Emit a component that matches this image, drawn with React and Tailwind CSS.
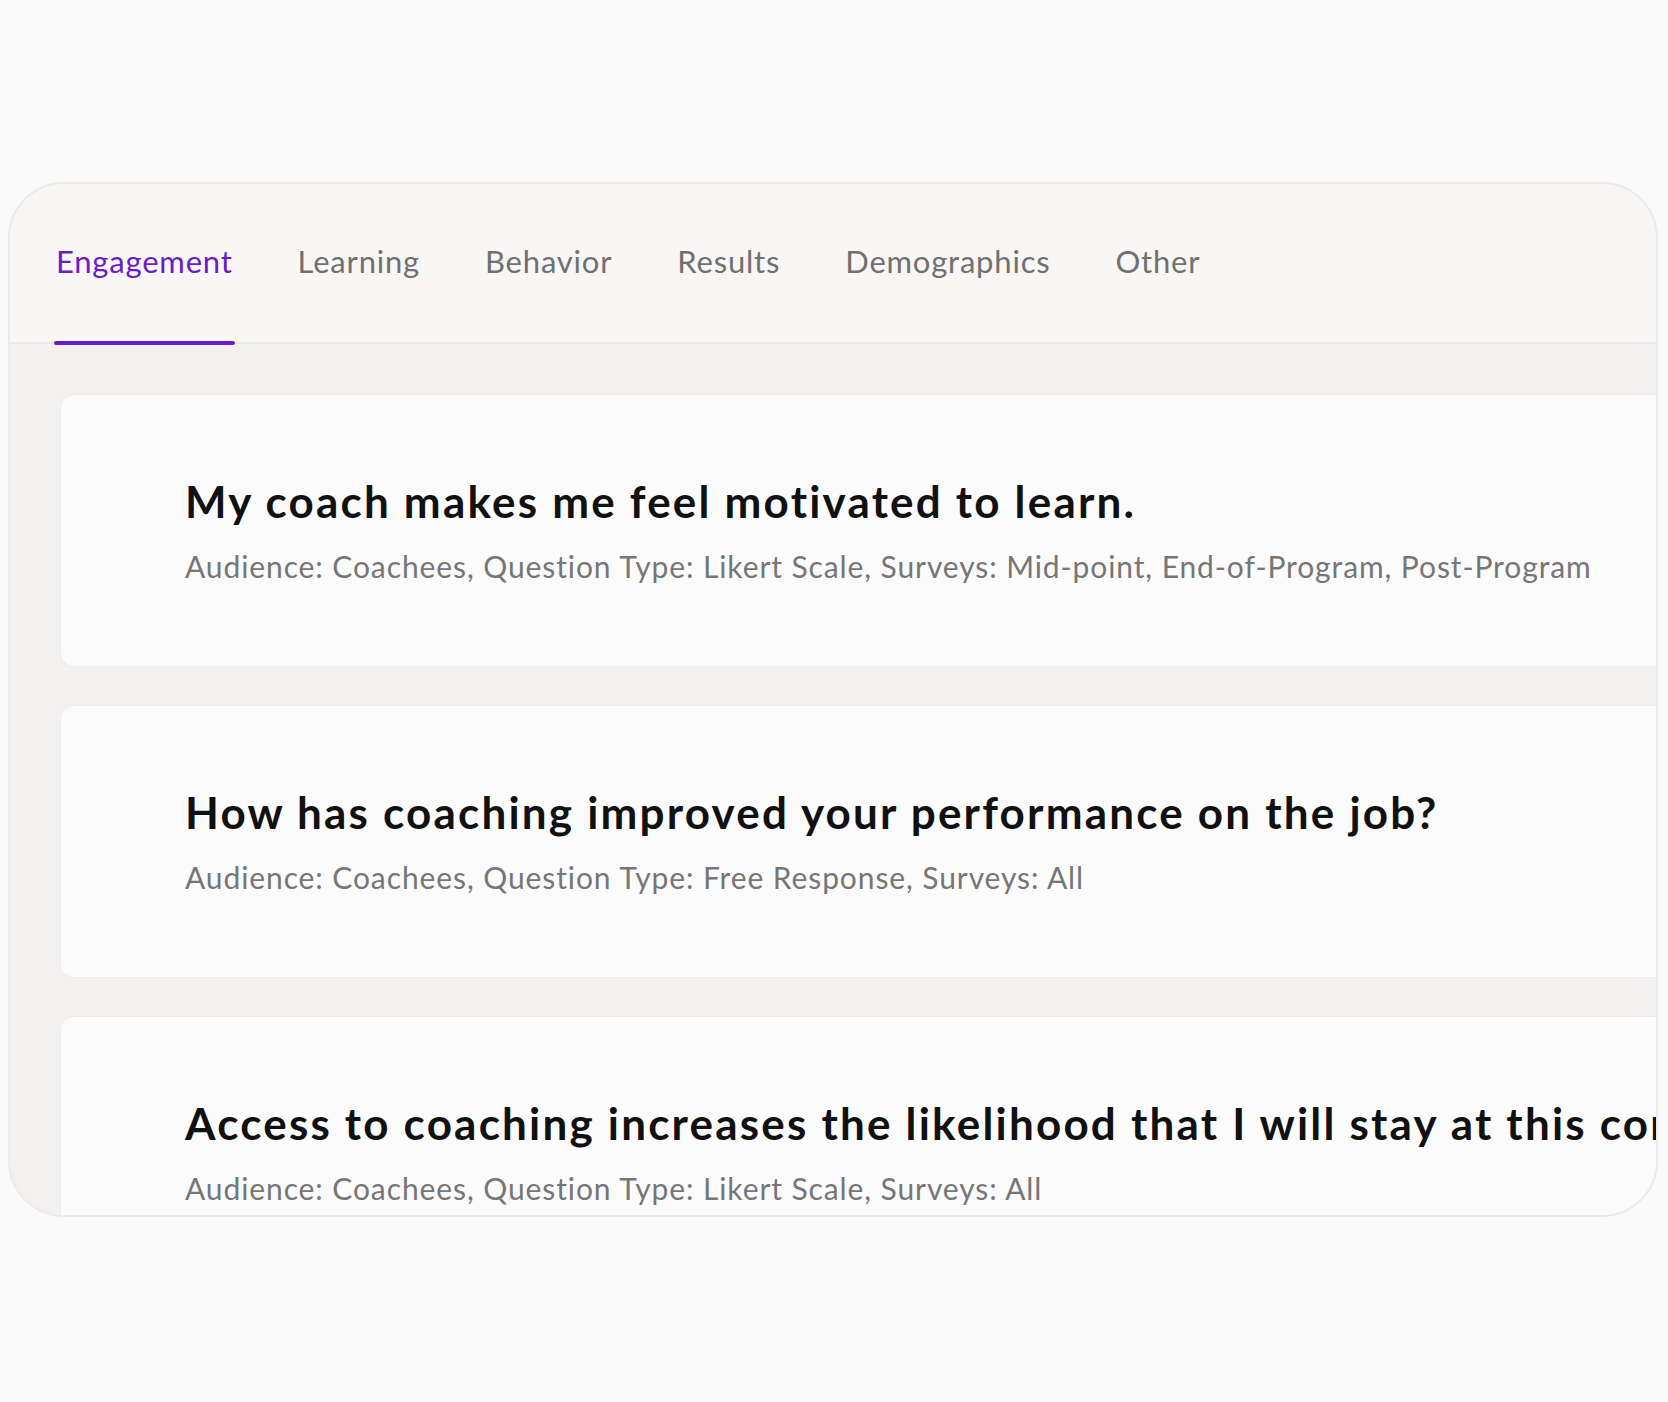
import React from 'react'

const tabs = ['Engagement', 'Learning', 'Behavior', 'Results', 'Demographics', 'Other']

const questions = [
  {
    title: 'My coach makes me feel motivated to learn.',
    meta: 'Audience: Coachees, Question Type: Likert Scale, Surveys: Mid-point, End-of-Program, Post-Program',
  },
  {
    title: 'How has coaching improved your performance on the job?',
    meta: 'Audience: Coachees, Question Type: Free Response, Surveys: All',
  },
  {
    title: 'Access to coaching increases the likelihood that I will stay at this company.',
    meta: 'Audience: Coachees, Question Type: Likert Scale, Surveys: All',
  },
]

export default function App() {
  return (
    <div
      className="min-h-screen bg-[#fafafa] pt-[182px] pl-[8px] pr-[10px]"
      style={{ fontFamily: 'Lato, "Open Sans", sans-serif' }}
    >
      <div className="h-[1035px] rounded-[56px] border-2 border-[#ebebeb] bg-[#f2f1ef] overflow-hidden flex flex-col">
        {/* Tabs */}
        <div className="h-[160px] shrink-0 bg-[#f8f7f6] border-b-2 border-[#ebebeb] flex pl-[44px] gap-[61px]">
          {tabs.map((tab, i) => (
            <div key={tab} className="relative h-full flex items-center px-[2px]">
              <span
                className={`mb-[4px] text-[31px] tracking-[0.8px] ${i === 0 ? 'text-[#6a1cc6]' : 'text-[#707070]'}`}
              >
                {tab}
              </span>
              {i === 0 && (
                <div className="absolute left-0 right-0 bottom-[-3px] h-[4px] rounded-full bg-[#6b1bd0]" />
              )}
            </div>
          ))}
        </div>

        {/* Question list, clipped at the panel's right edge */}
        <div className="pl-[50px] pt-[50px] flex flex-col gap-[38px] w-[1900px]">
          {questions.map((q) => (
            <div
              key={q.title}
              className="h-[273px] shrink-0 rounded-[14px] border border-[#ececec] bg-[#fcfbfb] pl-[124px] pt-[81px] whitespace-nowrap"
            >
              <h2 className="text-[44px] font-bold leading-[50px] tracking-[2.2px] text-[#111111]">{q.title}</h2>
              <p className="mt-[22px] text-[30px] leading-[36px] tracking-[0.9px] text-[#767676]">{q.meta}</p>
            </div>
          ))}
        </div>
      </div>
    </div>
  )
}
